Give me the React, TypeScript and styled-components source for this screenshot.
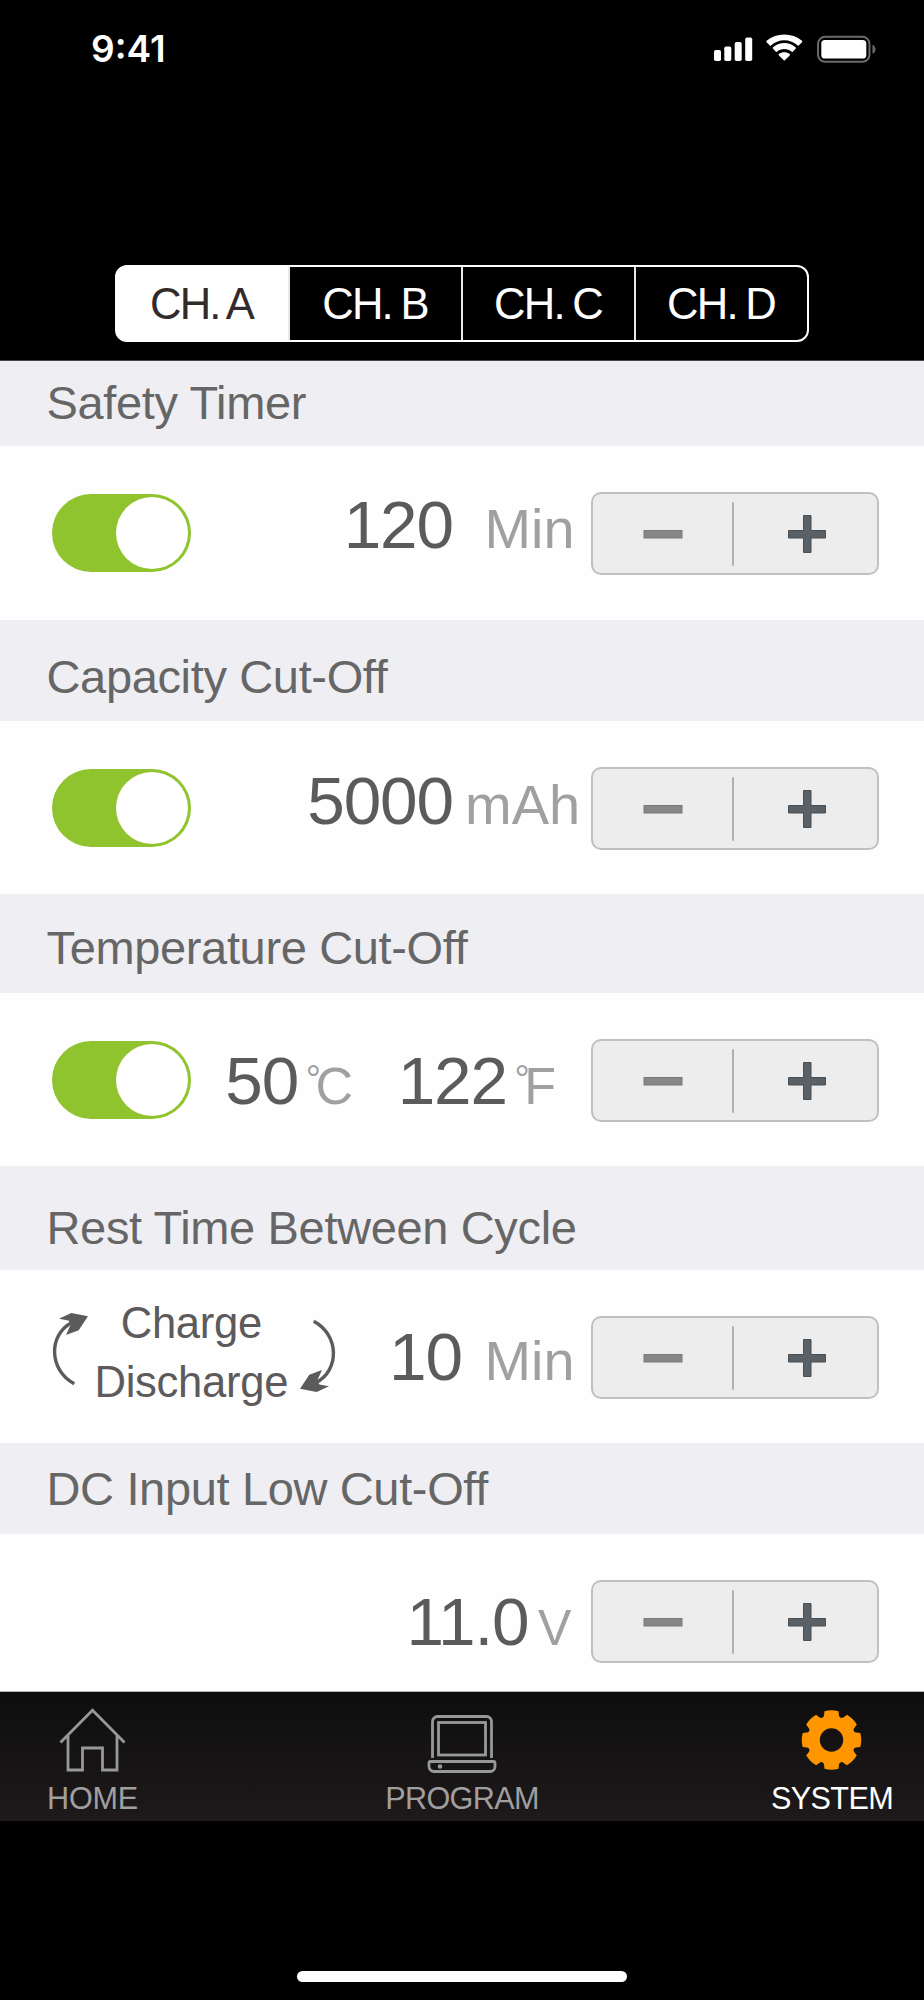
import React, { useState } from "react";
import styled, { createGlobalStyle } from "styled-components";

const GlobalStyle = createGlobalStyle`
  html, body { margin: 0; padding: 0; background: #000; }
  *, *::before, *::after { box-sizing: border-box; }
  button { font: inherit; color: inherit; background: none; border: 0; padding: 0; margin: 0; }
`;

const Screen = styled.div`
  width: 924px;
  height: 2000px;
  display: flex;
  flex-direction: column;
  background: #000;
  overflow: hidden;
  font-family: "Liberation Sans", Arial, sans-serif;
`;

const Header = styled.header`
  flex: none;
  height: 361px;
  border-bottom: 1px solid #464646;
`;

const StatusBar = styled.div`
  height: 265px;
  padding: 27px 48px 0 91px;
  display: flex;
  justify-content: space-between;
  align-items: flex-start;
`;

const Clock = styled.span`
  color: #fff;
  font-family: Inter, sans-serif;
  font-weight: 600;
  font-size: 37px;
  line-height: 44px;
`;

const StatusIcons = styled.svg`
  display: block;
  width: 164px;
  height: 32px;
  margin-top: 5px;
`;

const ChannelTabs = styled.div`
  display: grid;
  grid-template-columns: 171px 173px 173px 1fr;
  width: 694px;
  height: 77px;
  margin-left: 115px;
  border: 2px solid #fff;
  border-radius: 12px;
  background: #fff;
  overflow: hidden;
`;

const ChannelTab = styled.button<{ $active: boolean }>`
  text-align: center;
  font-size: 43.6px;
  line-height: 75px;
  height: 73px;
  padding-right: ${(p) => (p.$active ? 2 : 1)}px;
  letter-spacing: -1.8px;
  word-spacing: -1.8px;
  white-space: nowrap;
  color: ${(p) => (p.$active ? "#332b2b" : "#fff")};
  background: ${(p) => (p.$active ? "#fff" : "#000")};
  & + & { border-left: 2px solid #e8e8e8; }
`;

const Settings = styled.main`
  flex: none;
  height: 1331px;
  background: #fefefe;
  border-bottom: 1px solid #b4b4b4;
`;

const SectionTitle = styled.h2<{ $height: number; $top: number }>`
  margin: 0;
  height: ${(p) => p.$height}px;
  padding: ${(p) => p.$top}px 0 0 46.5px;
  background: #efeef3;
  color: #666;
  font-weight: 400;
  font-size: 47px;
  line-height: 52px;
  letter-spacing: -0.35px;
  white-space: nowrap;
`;

const Row = styled.div<{ $height: number }>`
  display: flex;
  align-items: flex-start;
  height: ${(p) => p.$height}px;
  padding: 0 45px 0 52px;
  background: #fefefe;
`;

const Switch = styled.button<{ $on: boolean }>`
  flex: none;
  display: flex;
  justify-content: ${(p) => (p.$on ? "flex-end" : "flex-start")};
  width: 139px;
  height: 78px;
  margin-top: 48px;
  padding: 3px;
  border-radius: 39px;
  background: ${(p) => (p.$on ? "#8fc42e" : "#c4c4c4")};
`;

const Knob = styled.span`
  width: 72px;
  height: 72px;
  border-radius: 50%;
  background: #fff;
`;

const Readings = styled.div<{ $top: number }>`
  flex: 1;
  display: flex;
  justify-content: flex-end;
  align-items: baseline;
  padding-top: ${(p) => p.$top}px;
  white-space: nowrap;
`;

const Value = styled.span`
  color: #5c5a5a;
  font-size: 67.5px;
  line-height: 70px;
  letter-spacing: -1.1px;
`;

const Unit = styled.span<{ $width: number; $inset: number; $size: number }>`
  flex: none;
  width: ${(p) => p.$width}px;
  padding-left: ${(p) => p.$inset}px;
  color: #a0a0a0;
  font-size: ${(p) => p.$size}px;
  line-height: 70px;
`;

const Degree = styled.span`
  font-size: 38px;
  line-height: 0;
  vertical-align: 12px;
  letter-spacing: -5.5px;
`;

const StepperBox = styled.div<{ $top: number }>`
  flex: none;
  display: grid;
  grid-template-columns: 139px 2px 1fr;
  align-items: center;
  width: 288px;
  height: 83px;
  margin-top: ${(p) => p.$top}px;
  border: 2px solid #c0c0c0;
  border-radius: 10px;
  background: #ededed;
`;

const StepButton = styled.button`
  height: 100%;
  display: flex;
  align-items: center;
  justify-content: center;
  &:first-child { padding-left: 1px; }
  &:last-child { padding-left: 3px; }
`;

const StepDivider = styled.span`
  width: 2px;
  height: 64px;
  border-radius: 1px;
  background: #b0b0b0;
`;

const Cycle = styled.div`
  flex: none;
  display: flex;
  align-items: flex-start;
  margin-left: -2px;
  padding-top: 24px;
`;

const CycleArrow = styled.svg<{ $drop: number }>`
  display: block;
  width: 38px;
  height: 78px;
  margin-top: ${(p) => p.$drop}px;
`;

const CycleLabels = styled.div`
  width: 211.6px;
  padding-right: 5px;
  text-align: center;
  color: #5c5a5a;
  font-size: 43.6px;
  line-height: 58.7px;
  letter-spacing: -0.3px;
`;

const TabBar = styled.nav`
  flex: none;
  height: 129px;
  display: grid;
  grid-template-columns: 1fr auto 1fr;
  align-items: start;
  padding: 15px 31px 0;
  background: linear-gradient(#0e0e0e, #1e191b);
`;

const TabItem = styled.button<{ $active?: boolean }>`
  display: flex;
  flex-direction: column;
  align-items: center;
  color: ${(p) => (p.$active ? "#fff" : "#a09f9f")};
  font-size: 30.6px;
  line-height: 34px;
  letter-spacing: -0.65px;
  &:first-child { justify-self: start; margin-left: 16px; letter-spacing: -0.2px; }
  &:last-child { justify-self: end; }
`;

const TabIcon = styled.svg`
  display: block;
  width: 72px;
  height: 68px;
  margin-bottom: 6px;
`;

const HomeArea = styled.footer`
  flex: 1;
  display: flex;
  justify-content: center;
  align-items: flex-end;
  padding-bottom: 18px;
`;

const HomeIndicator = styled.div`
  width: 330px;
  height: 11px;
  border-radius: 6px;
  background: #fff;
`;

function Stepper({ top, onStep }: { top: number; onStep: (d: number) => void }) {
  return (
    <StepperBox $top={top}>
      <StepButton aria-label="Decrease" onClick={() => onStep(-1)}>
        <svg width="40" height="40">
          <rect x="1" y="16.5" width="38" height="7.5" fill="#858788" stroke="#77797a" strokeWidth="1" />
        </svg>
      </StepButton>
      <StepDivider />
      <StepButton aria-label="Increase" onClick={() => onStep(1)}>
        <svg width="40" height="40">
          <path d="M16.5 1.5h7.5v15h14.5v7.5h-14.5v14.5h-7.5v-14.5h-15v-7.5h15z" fill="#596166" stroke="#474e55" strokeWidth="1" />
        </svg>
      </StepButton>
    </StepperBox>
  );
}

function Toggle() {
  const [on, setOn] = useState(true);
  return (
    <Switch $on={on} role="switch" aria-checked={on} onClick={() => setOn(!on)}>
      <Knob />
    </Switch>
  );
}

const arrowShape = (
  <>
    <path d="M24.3 75.7C-1.5 62 -1.7 26.5 22 14.5" fill="none" stroke="#5c5a5a" strokeWidth="3.4" />
    <path d="M38 8.3L21.3 5L9 10.7L18.5 12.5L21 16L16 27L28.7 22.3Z" fill="#5c5a5a" />
  </>
);

const gearPath = (() => {
  const pts: string[] = [];
  for (let i = 0; i < 8; i++) {
    const base = (i * Math.PI) / 4;
    const at = (r: number, a: number) =>
      `${(35.5 + r * Math.sin(base + a)).toFixed(2)} ${(33 - r * Math.cos(base + a)).toFixed(2)}`;
    pts.push(`${i === 0 ? "M" : "L"}${at(24.2, -0.35)}`);
    pts.push(`Q${at(25, -0.3)} ${at(29.6, -0.24)}`);
    pts.push(`Q${at(30.8, 0)} ${at(29.6, 0.24)}`);
    pts.push(`Q${at(25, 0.3)} ${at(24.2, 0.35)}`);
  }
  return pts.join("") + "ZM35.5 21.3a11.7 11.7 0 1 0 0 23.4a11.7 11.7 0 1 0 0-23.4Z";
})();

const channels = ["A", "B", "C", "D"];

export default function App() {
  const [channel, setChannel] = useState("A");
  const [timer, setTimer] = useState(120);
  const [capacity, setCapacity] = useState(5000);
  const [celsius, setCelsius] = useState(50);
  const [rest, setRest] = useState(10);
  const [volts, setVolts] = useState(110);

  return (
    <Screen>
      <GlobalStyle />
      <Header>
        <StatusBar>
          <Clock>9:41</Clock>
          <StatusIcons viewBox="712 32 164 32">
            <g fill="#fff">
              <rect x="714" y="50" width="7" height="11" rx="1.8" />
              <rect x="724.3" y="46.5" width="7" height="14.5" rx="1.8" />
              <rect x="734.7" y="42" width="7" height="19" rx="1.8" />
              <rect x="745.2" y="37.5" width="7" height="23.5" rx="1.8" />
              <path d="M784.3 40.2c5 0 9.8 2 13.4 5.3c.3.3.7.3 1 0l3.3-3.3c.4-.4.4-1 0-1.4c-9.9-8.5-25.5-8.5-35.4 0c-.4.4-.4 1 0 1.4l3.3 3.3c.3.3.7.3 1 0c3.6-3.3 8.4-5.3 13.4-5.3z" />
              <path d="M784.3 49c2.8 0 5.4 1 7.4 2.8c.3.3.7.3 1 0l2.9-3.1c.4-.4.4-1 0-1.4c-6.4-5.8-16.2-5.8-22.6 0c-.4.4-.4 1 0 1.4l2.9 3.1c.3.3.7.3 1 0c2-1.8 4.6-2.8 7.4-2.8z" />
              <path d="M789.7 55.4c.4-.4.4-1 0-1.4c-3.2-2.5-7.6-2.5-10.8 0c-.4.4-.4 1 0 1.4l4.9 4.9c.3.3.7.3 1 0z" />
              <rect x="821.3" y="40" width="45" height="18.5" rx="3.6" />
            </g>
            <rect x="818" y="36.8" width="51.5" height="25" rx="7" fill="none" stroke="#6a6a6a" strokeWidth="2" />
            <path d="M872.5 44.7c4 1.8 4 7.5 0 9.3z" fill="#6a6a6a" />
          </StatusIcons>
        </StatusBar>
        <ChannelTabs role="tablist">
          {channels.map((c) => (
            <ChannelTab key={c} role="tab" $active={c === channel} onClick={() => setChannel(c)}>
              CH. {c}
            </ChannelTab>
          ))}
        </ChannelTabs>
      </Header>

      <Settings>
        <SectionTitle $height={85} $top={16}>Safety Timer</SectionTitle>
        <Row $height={174}>
          <Toggle />
          <Readings $top={44}>
            <Value>{timer}</Value>
            <Unit $width={138} $inset={31.5} $size={55.8}>Min</Unit>
          </Readings>
          <Stepper top={46} onStep={(d) => setTimer(timer + d)} />
        </Row>

        <SectionTitle $height={101} $top={31}>Capacity Cut-Off</SectionTitle>
        <Row $height={173}>
          <Toggle />
          <Readings $top={45}>
            <Value>{capacity}</Value>
            <Unit $width={138} $inset={12} $size={56}>mAh</Unit>
          </Readings>
          <Stepper top={46} onStep={(d) => setCapacity(capacity + d * 100)} />
        </Row>

        <SectionTitle $height={99} $top={28}>Temperature Cut-Off</SectionTitle>
        <Row $height={173}>
          <Toggle />
          <Readings $top={53}>
            <Value>{celsius}</Value>
            <Unit $width={99.5} $inset={7.5} $size={52}>
              <Degree>°</Degree>C
            </Unit>
            <Value>{Math.round(celsius * 1.8 + 32)}</Value>
            <Unit $width={84} $inset={7.5} $size={52}>
              <Degree>°</Degree>F
            </Unit>
          </Readings>
          <Stepper top={46} onStep={(d) => setCelsius(celsius + d)} />
        </Row>

        <SectionTitle $height={104} $top={36}>Rest Time Between Cycle</SectionTitle>
        <Row $height={173}>
          <Cycle>
            <CycleArrow viewBox="0 0 38 78" $drop={14}>{arrowShape}</CycleArrow>
            <CycleLabels>
              <div>Charge</div>
              <div>Discharge</div>
            </CycleLabels>
            <CycleArrow viewBox="0 0 38 78" $drop={25}>
              <g transform="rotate(180 19 39)">{arrowShape}</g>
            </CycleArrow>
          </Cycle>
          <Readings $top={52}>
            <Value>{rest}</Value>
            <Unit $width={129} $inset={22.5} $size={55.8}>Min</Unit>
          </Readings>
          <Stepper top={46} onStep={(d) => setRest(rest + d)} />
        </Row>

        <SectionTitle $height={91} $top={20}>DC Input Low Cut-Off</SectionTitle>
        <Row $height={157}>
          <Readings $top={53}>
            <Value>{(volts / 10).toFixed(1)}</Value>
            <Unit $width={62.5} $inset={9.5} $size={50}>V</Unit>
          </Readings>
          <Stepper top={46} onStep={(d) => setVolts(volts + d)} />
        </Row>
      </Settings>

      <TabBar>
        <TabItem>
          <TabIcon viewBox="0 0 72 68" fill="none" stroke="#989898" strokeWidth="2.8">
            <path d="M4.5 35.5L36.5 3.3L68.5 35.5M12 28.5V63H26.5V41H46.5V63H61V28.5" />
          </TabIcon>
          HOME
        </TabItem>
        <TabItem>
          <TabIcon viewBox="0 0 72 68" fill="none" stroke="#989898" strokeWidth="2.8">
            <path d="M6.5 51V14.5a5 5 0 0 1 5-5H60.5a5 5 0 0 1 5 5V51" />
            <rect x="12.5" y="15.5" width="47" height="32.5" />
            <path d="M4.5 54.5H67.5a1.5 1.5 0 0 1 1.5 1.5V59.5a5 5 0 0 1 -5 5H8a5 5 0 0 1 -5 -5V56a1.5 1.5 0 0 1 1.5 -1.5Z" />
            <circle cx="14" cy="59.5" r="2.3" fill="#989898" stroke="none" />
          </TabIcon>
          PROGRAM
        </TabItem>
        <TabItem $active>
          <TabIcon viewBox="0 0 72 68">
            <path d={gearPath} fill="#ff9500" fillRule="evenodd" />
          </TabIcon>
          SYSTEM
        </TabItem>
      </TabBar>

      <HomeArea>
        <HomeIndicator />
      </HomeArea>
    </Screen>
  );
}
